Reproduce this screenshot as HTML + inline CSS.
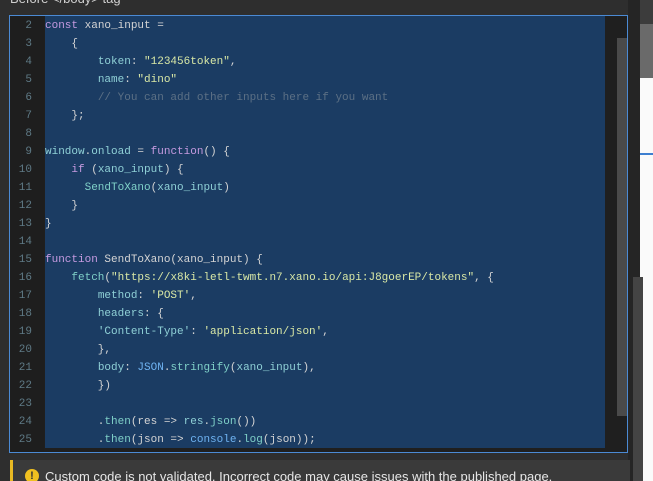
<!DOCTYPE html>
<html style="overflow:hidden;height:481px"><head><style>
body{margin:0;width:653px;height:481px;overflow:hidden;background:#2e2e2e;position:relative;font-family:"Liberation Sans",sans-serif}
.t{position:absolute;left:10px;top:-9px;color:#cfcfcf;font-size:13px}
.ed{position:absolute;left:9px;top:15px;width:617px;height:436px;border:1px solid #4b8ad4;background:#1f1f1f;overflow:hidden}
.g{position:absolute;left:0;top:0;width:34px;height:436px;background:#1e1e1e}
.c{position:absolute;left:35px;top:0;width:560px;height:432px;background:#1b3c63}
.sb{position:absolute;left:607px;top:22px;width:10px;height:378px;background:#4a4a4a}
.ln{position:absolute;font:11px/18px "Liberation Mono",monospace;white-space:pre}
.n{left:0;width:22px;text-align:right;color:#5f7a86}
.code{left:35px;top:1px!important;color:#d4d4d4}
.k{color:#c59ae0}.p{color:#8fd0d6}.s{color:#d9e8a6}.cm{color:#5c7085}.f{color:#7fd0c8}.b{color:#6fb3f2}
.r1{position:absolute;left:628px;top:0;width:12px;height:481px;background:#252525}
.r2{position:absolute;left:640px;top:0;width:13px;height:481px;background:#fafafa}
.warn{position:absolute;left:10px;top:460px;width:617px;height:21px;overflow:hidden;background:#3a3a3a;border-left:3px solid #e8b923;color:#e6e6e6;font-size:13px}
.ic{position:absolute;left:12px;top:9px;width:14px;height:14px;border-radius:50%;background:#f0c020;color:#333;font:bold 11px/14px "Liberation Sans";text-align:center}
</style></head><body>
<div class="t">Before &lt;/body&gt; tag</div>
<div class="r1"></div>
<div class="r2"><div style="position:absolute;top:0;height:24px;width:13px;background:#3c3c3c"></div><div style="position:absolute;top:24px;height:54px;width:13px;background:#6a6a6a"></div><div style="position:absolute;top:153px;height:2px;width:13px;background:#3d7fd0"></div></div>
<div style="position:absolute;left:633px;top:277px;width:10px;height:204px;background:#444"></div>
<div class="ed"><div class="g"></div><div class="c"></div><div class="sb"></div>
<div class="ln n" style="top:1px">2
3
4
5
6
7
8
9
10
11
12
13
14
15
16
17
18
19
20
21
22
23
24
25</div>
<div class="ln code" style="top:0"><span class="k">const</span> xano_input =
    {
        <span class="p">token</span>: <span class="s">"123456token"</span>,
        <span class="p">name</span>: <span class="s">"dino"</span>
        <span class="cm">// You can add other inputs here if you want</span>
    };

<span class="p">window</span>.<span class="p">onload</span> = <span class="k">function</span>() {
    <span class="k">if</span> (<span class="p">xano_input</span>) {
      <span class="f">SendToXano</span>(<span class="p">xano_input</span>)
    }
}

<span class="k">function</span> SendToXano(xano_input) {
    <span class="f">fetch</span>(<span class="s">"https://x8ki-letl-twmt.n7.xano.io/api:J8goerEP/tokens"</span>, {
        <span class="p">method</span>: <span class="s">'POST'</span>,
        <span class="p">headers</span>: {
        <span class="p">'Content-Type'</span>: <span class="s">'application/json'</span>,
        },
        <span class="p">body</span>: <span class="b">JSON</span>.<span class="f">stringify</span>(<span class="p">xano_input</span>),
        })

        .<span class="f">then</span>(res =&gt; <span class="p">res</span>.<span class="f">json</span>())
        .<span class="f">then</span>(json =&gt; <span class="b">console</span>.<span class="f">log</span>(json));</div>
</div>
<div class="warn"><div class="ic">!</div><div style="position:absolute;left:32px;top:9px;white-space:nowrap">Custom code is not validated. Incorrect code may cause issues with the published page.</div></div>
</body></html>
